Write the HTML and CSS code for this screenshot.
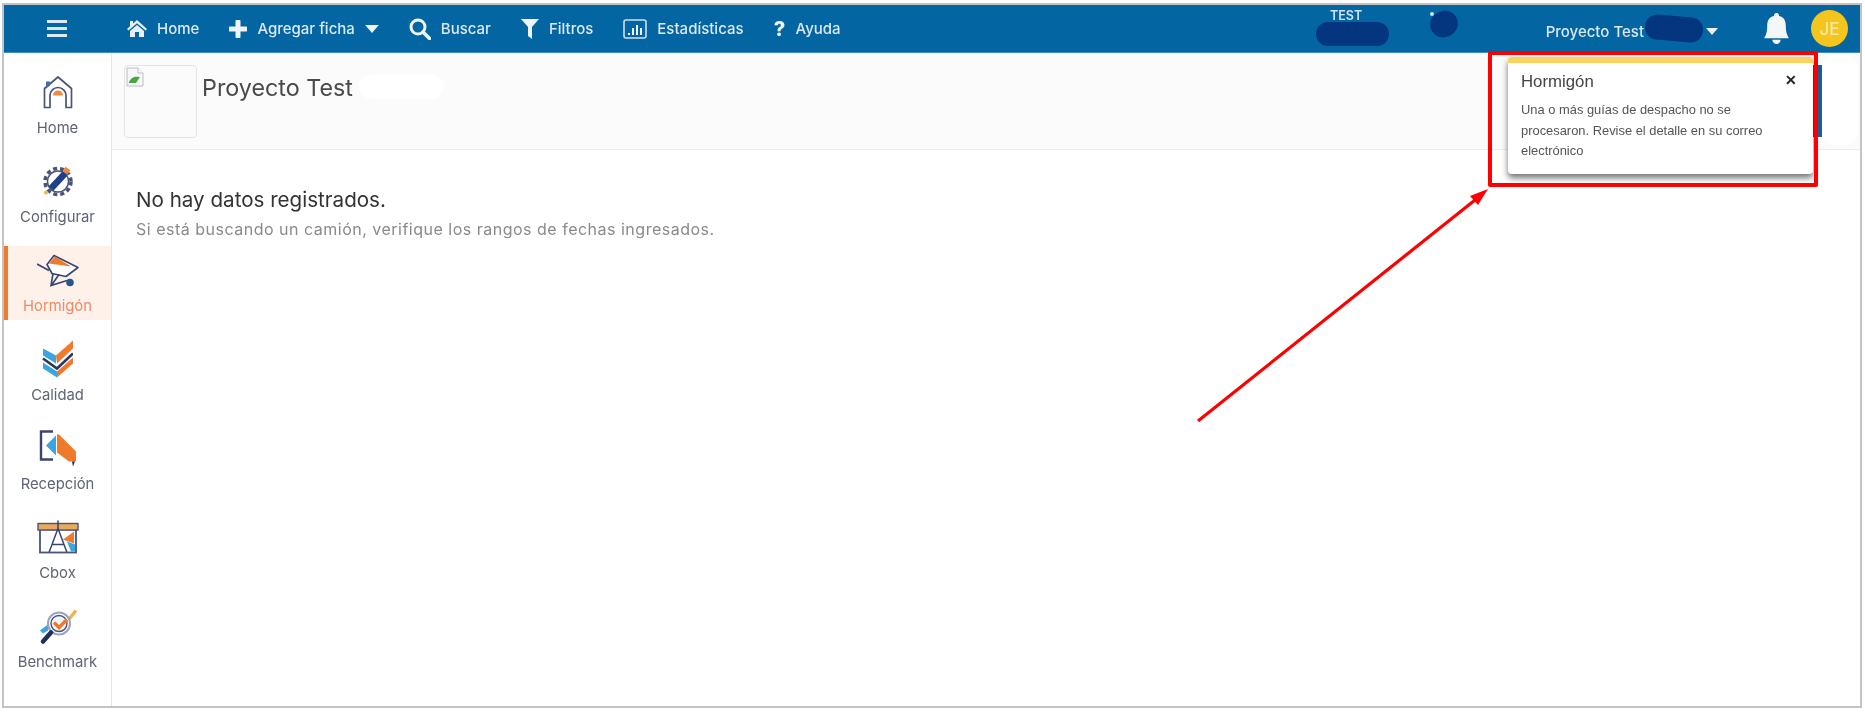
FILE: index.html
```html
<!DOCTYPE html>
<html lang="es">
<head>
<meta charset="utf-8">
<title>Proyecto Test</title>
<link rel="stylesheet" href="styles.css">
</head>
<body>
<div class="frame">
  <header class="topbar">
    <div class="burger-cell">
      <svg class="ic-burger" viewBox="0 0 20 17"><path d="M0 1.500h20M0 8.500h20M0 15.500h20" stroke="#dfe9f1" stroke-width="3"/></svg>
    </div>
    <nav class="nav">
      <a class="nav-item"><svg class="ic-home" viewBox="0 0 20 17"><path fill="#e8f0f6" d="M10 0 L20 9 L18.600 10.500 L10 3.200 L1.400 10.500 L0 9 L3 6.300 V1 H6 V3.600 Z M10 5 L17 11 V17 H12 V12 H8 V17 H3 V11 Z"/></svg><span>Home</span></a>
      <a class="nav-item"><svg class="ic-plus" viewBox="0 0 18 18"><path d="M9 1.500v15M1.500 9h15" stroke="#eef4f8" stroke-width="5" stroke-linecap="round"/></svg><span>Agregar ficha</span><svg class="ic-caret" viewBox="0 0 12 7"><path fill="#eef4f8" d="M0 0h12L6 7z"/></svg></a>
      <a class="nav-item"><svg class="ic-search" viewBox="0 0 22 22"><circle cx="9" cy="9" r="7" fill="none" stroke="#eef4f8" stroke-width="3"/><path d="M14 14l6.500 6.500" stroke="#eef4f8" stroke-width="3.600" stroke-linecap="round"/></svg><span>Buscar</span></a>
      <a class="nav-item"><svg class="ic-filter" viewBox="0 0 18 20"><path fill="#eef4f8" d="M0 0h18L11 8v12l-4-3V8z"/></svg><span>Filtros</span></a>
      <a class="nav-item"><svg class="ic-stats" viewBox="0 0 24 20"><rect x="1" y="1" width="22" height="18" rx="2" fill="none" stroke="#cfe0ec" stroke-width="1.600"/><path fill="#eef4f8" d="M5 14h2v2H5zM9 9h2v7H9zM13 6h2v10h-2zM17 9h2v7h-2z"/></svg><span>Estadísticas</span></a>
      <a class="nav-item"><b class="ic-help">?</b><span>Ayuda</span></a>
    </nav>
    <div class="top-right">
      <span class="test-tag">TEST</span>
      <span class="project">Proyecto Test</span>
      <svg class="ic-caret-sm" viewBox="0 0 12 7"><path fill="#eef4f8" d="M0 0h12L6 7z"/></svg>
      <svg class="ic-bell" viewBox="0 0 24 30"><path fill="#f4f7f9" d="M12 0a2.400 2.400 0 0 1 2.400 3C20 4.200 21 8.500 21 13c0 5 1 8 3 11.500H0c2-3.500 3-6.500 3-11.500 0-4.500 1-8.800 6.600-10A2.400 2.400 0 0 1 12 0zM8 26h8a4 4 0 0 1-8 0z"/></svg>
      <span class="avatar">JE</span>
    </div>
    <i class="redact r-test"></i>
    <i class="speck"></i>
    <i class="redact r-dot"></i>
    <i class="redact r-project"></i>
  </header>
  <div class="body">
    <aside class="sidebar">
      <a class="side-item">
        <svg class="side-ic" width="30" height="33" viewBox="0 0 30 33"><path d="M1.500 32V13L15 1.500 28.500 13V32H23V20a8 8 0 0 0-16 0V32z" fill="none" stroke="#4a5378" stroke-width="1.700" stroke-linejoin="round"/><path d="M10 20a5 5 0 0 1 10 0z" fill="#f4883a"/><path d="M3 6h4v4l-4 3z" fill="#3f6fa8"/></svg>
        <span>Home</span>
      </a>
      <a class="side-item">
        <svg class="side-ic" width="34" height="33" viewBox="0 0 34 33"><circle cx="17" cy="17" r="13" fill="none" stroke="#4a5378" stroke-width="3.500" stroke-dasharray="4 3"/><circle cx="17" cy="17" r="10.500" fill="#fff" stroke="#4a5378" stroke-width="1.500"/><path d="M10 24L24 9" stroke="#1f3f8a" stroke-width="6.500"/><path d="M24 8l3-4" stroke="#f4883a" stroke-width="6"/><circle cx="5" cy="28" r="2" fill="#f4b04a"/></svg>
        <span>Configurar</span>
      </a>
      <a class="side-item is-active">
        <svg class="side-ic" width="42" height="33" viewBox="0 0 42 33"><path d="M0 10.500L12 17" stroke="#3b4670" stroke-width="1.800"/><path d="M10 11L17 2 41 14 29 23 15 20z" fill="#fff" stroke="#3b4670" stroke-width="1.600" stroke-linejoin="round"/><path d="M12 10L18 3 34 13z" fill="#f07a2b"/><path d="M16 20L14 32 30 27M22 21L15 31" fill="none" stroke="#3b4670" stroke-width="1.600"/><circle cx="33" cy="29" r="3.800" fill="#2b5590"/></svg>
        <span>Hormigón</span>
      </a>
      <a class="side-item">
        <svg class="side-ic" width="31" height="37" viewBox="0 0 31 37"><path fill="#f07a2b" d="M14 15L31 0v8L15 23z"/><path fill="#3aa5e0" d="M1 8l13 7v8L1 15z"/><path d="M1 18l14 10L31 13" fill="none" stroke="#2d3560" stroke-width="2.600"/><path fill="#3aa5e0" d="M1 22l14 9v6L1 28z"/><path fill="#f07a2b" d="M15 31l16-14v6L15 37z"/></svg>
        <span>Calidad</span>
      </a>
      <a class="side-item">
        <svg class="side-ic" width="37" height="37" viewBox="0 0 37 37"><path d="M14 2H2v28h12" fill="none" stroke="#3b4670" stroke-width="2.400"/><path fill="#3aa5e0" d="M7 16L17 6v20z"/><path fill="#f07a2b" d="M18 5h2l17 17v10h-7l-12-9z"/><path fill="#222f5c" d="M33 32h3l-2 5z"/></svg>
        <span>Recepción</span>
      </a>
      <a class="side-item">
        <svg class="side-ic" width="42" height="33" viewBox="0 0 42 33"><rect x="3" y="9" width="36" height="23" fill="#fff" stroke="#4a5378" stroke-width="1.800"/><rect x="1" y="3" width="40" height="6.500" fill="#e8aa5c" stroke="#4a5378" stroke-width="1.400"/><path d="M21 0v8M21 8L12 32M21 8l9 24M15 24h12" fill="none" stroke="#3b4670" stroke-width="1.500"/><path fill="#f07a2b" d="M37 11v12l-11-4z"/><path fill="#3aa5e0" d="M30 21l8 3v7h-4z"/></svg>
        <span>Cbox</span>
      </a>
      <a class="side-item">
        <svg class="side-ic" width="38" height="37" viewBox="0 0 38 37"><path fill="#3aa5e0" d="M1 23l9-7-1 7-5 3z"/><path d="M28 14l9-11" stroke="#eeb25a" stroke-width="3.500"/><circle cx="20" cy="16" r="11" fill="#fff" stroke="#9aa3c0" stroke-width="2"/><circle cx="20" cy="16" r="8" fill="#f3f4f8" stroke="#4a5378" stroke-width="1.400"/><path d="M15 15l5 5 8-8" fill="none" stroke="#f07a2b" stroke-width="3.500"/><path d="M12 25L4 34" stroke="#222f5c" stroke-width="4.500" stroke-linecap="round"/></svg>
        <span>Benchmark</span>
      </a>
    </aside>
    <main class="main">
      <section class="project-head">
        <div class="logo-box">
          <svg class="broken" width="19" height="20" viewBox="0 0 19 20"><path d="M1 1h11l5 5v13H1z" fill="#f5f7fa" stroke="#b9bec6"/><path d="M3 15c2-5 6-6 11-5l-4 6H3z" fill="#4aa640"/><path d="M12 1v5h5" fill="#fff" stroke="#b9bec6"/></svg>
        </div>
        <h1 class="project-title">Proyecto Test</h1>
        <i class="white-pill"></i>
      </section>
      <section class="empty">
        <h2 class="empty-title">No hay datos registrados.</h2>
        <p class="empty-sub">Si está buscando un camión, verifique los rangos de fechas ingresados.</p>
      </section>
    </main>
  </div>
  <i class="side-strip"></i>
  <i class="white-blob"></i>
  <div class="toast">
    <div class="toast-head"><strong>Hormigón</strong><span class="toast-close">✕</span></div>
    <p>Una o más guías de despacho no se procesaron. Revise el detalle en su correo electrónico</p>
  </div>
  <i class="callout"></i>
  <svg class="arrow" width="300" height="240" viewBox="0 0 300 240"><path d="M2 236L284 11" stroke="#f00" stroke-width="3.200"/><path d="M292 4L274 11 282 20z" fill="#f00"/></svg>
</div>
</body>
</html>
```
FILE: styles.css
```css
* { box-sizing: border-box; }
html, body { margin: 0; height: 100%; background: #fff; overflow: hidden; }
body { padding: 3px 3px 5px 2px; font-family: Inter, "Liberation Sans", sans-serif; }
a { color: inherit; text-decoration: none; }
i { display: block; }

.frame {
  position: relative;
  height: 705px;
  border: 2px solid #c4c4c4;
  display: flex;
  flex-direction: column;
  background: #fff;
}

.topbar {
  height: 48px;
  flex: none;
  background: #0366a3;
  border-bottom: 1px solid #3c8fc4;
  display: flex;
  align-items: center;
  color: #dce8f1;
  font-size: 15px;
  font-weight: 500;
  filter: blur(.4px);
}
.burger-cell { width: 106px; flex: none; display: flex; justify-content: center; }
.ic-burger { width: 20px; height: 17px; }
.nav { display: flex; align-items: center; gap: 30px; padding-left: 17px; }
.nav-item { display: flex; align-items: center; gap: 10px; }
.ic-home { width: 20px; height: 17px; }
.ic-plus { width: 18px; height: 18px; }
.ic-caret { width: 14px; height: 8px; }
.ic-search { width: 22px; height: 22px; }
.ic-filter { width: 18px; height: 20px; }
.ic-stats { width: 24px; height: 20px; }
.ic-help { width: 12px; font-size: 20px; font-weight: 800; color: #eef4f8; text-align: center; }

.top-right { margin-left: auto; display: flex; align-items: center; padding-right: 12px; }
.test-tag { position: absolute; left: 1326px; top: 3px; font-size: 12.500px; font-weight: 600; color: #cfe3f0; }
.project { margin-right: 62px; padding-top: 5px; }
.ic-caret-sm { width: 12px; height: 7px; margin: 6px 45px 0 0; }
.ic-bell { width: 27px; height: 31px; margin-right: 21px; }
.avatar {
  width: 37px; height: 37px; border-radius: 50%;
  background: #f4c51c; color: #f6e9a6;
  display: flex; align-items: center; justify-content: center;
  font-size: 17px; font-weight: 500;
}

.redact { position: absolute; background: #03367f; }
.r-test { left: 1312px; top: 17px; width: 73px; height: 24px; border-radius: 12px; }
.r-dot { left: 1426px; top: 6px; width: 28px; height: 26px; border-radius: 13px; transform: rotate(-30deg); }
.r-project { left: 1641px; top: 11px; width: 58px; height: 25px; border-radius: 12px; transform: rotate(5deg); }
.speck { position: absolute; left: 1426px; top: 7px; width: 4px; height: 4px; border-radius: 50%; background: #cfe3f0; }

.body { flex: 1; display: flex; min-height: 0; filter: blur(.4px); }
.sidebar {
  width: 108px;
  flex: none;
  border-right: 1px solid #e6e6e6;
  padding-top: 15px;
  display: flex;
  flex-direction: column;
  gap: 15px;
  background: #fff;
}
.side-item {
  height: 74px;
  display: flex;
  flex-direction: column;
  align-items: center;
  color: #5f6475;
  font-size: 14.800px;
  font-weight: 400;
  padding-top: 5px;
  position: relative;
}
.side-ic { height: 38px; display: block; flex: none; }
.side-item span { margin-top: 9px; line-height: 17px; }
.is-active { background: #fdf1ea; color: #ee8a68; border-left: 4px solid #f07a2b; padding-right: 4px; }

.main { flex: 1; min-width: 0; }
.project-head {
  height: 97px;
  background: #fbfbfb;
  border-bottom: 1px solid #ececec;
  display: flex;
  align-items: flex-start;
  padding: 12px 0 0 12px;
}
.logo-box { width: 73px; height: 73px; border: 1px solid #e4e4e4; border-radius: 4px; padding: 1px; }
.broken { display: block; }
.project-title { margin: 8px 0 0 5px; font-size: 23.300px; line-height: 30px; font-weight: 400; color: #4a4a4a; }
.white-pill { width: 85px; height: 24px; margin: 10px 0 0 6px; border-radius: 12px; background: #fff; }

.empty { padding: 37px 0 0 24px; }
.empty-title { margin: 0; font-size: 20.600px; line-height: 26px; font-weight: 400; color: #333; }
.empty-sub { margin: 5px 0 0; font-size: 16px; letter-spacing: .5px; line-height: 22px; color: #8a8a8a; }

.toast {
  position: absolute;
  left: 1504px; top: 52px;
  width: 305px; height: 117px;
  background: #fff;
  border-top: 6px solid #f8d35e;
  border-radius: 4px;
  box-shadow: 0 4px 6px rgba(0,0,0,.55);
  padding: 7px 13px;
  font-family: "Liberation Sans", Arial, sans-serif;
  color: #444;
  filter: blur(.4px);
}
.toast-head { display: flex; justify-content: space-between; align-items: flex-start; }
.toast-head strong { font-size: 16.800px; font-weight: 400; line-height: 24px; }
.toast-close { font-size: 14px; font-weight: 700; color: #222; margin: 0 3px 0 0; line-height: 20px; }
.toast p { margin: 6px 0 0; font-size: 12.900px; line-height: 20.500px; color: #555; }
.side-strip { position: absolute; left: 1809px; top: 60px; width: 9px; height: 72px; background: #1a5f9a; }
.white-blob { position: absolute; left: 1818px; top: 50px; width: 36px; height: 90px; border-radius: 12px; background: #fff; }
.callout { position: absolute; left: 1484px; top: 46px; width: 330px; height: 136px; border: 4px solid #f00; border-radius: 2px; }
.arrow { position: absolute; left: 1192px; top: 180px; }
```
